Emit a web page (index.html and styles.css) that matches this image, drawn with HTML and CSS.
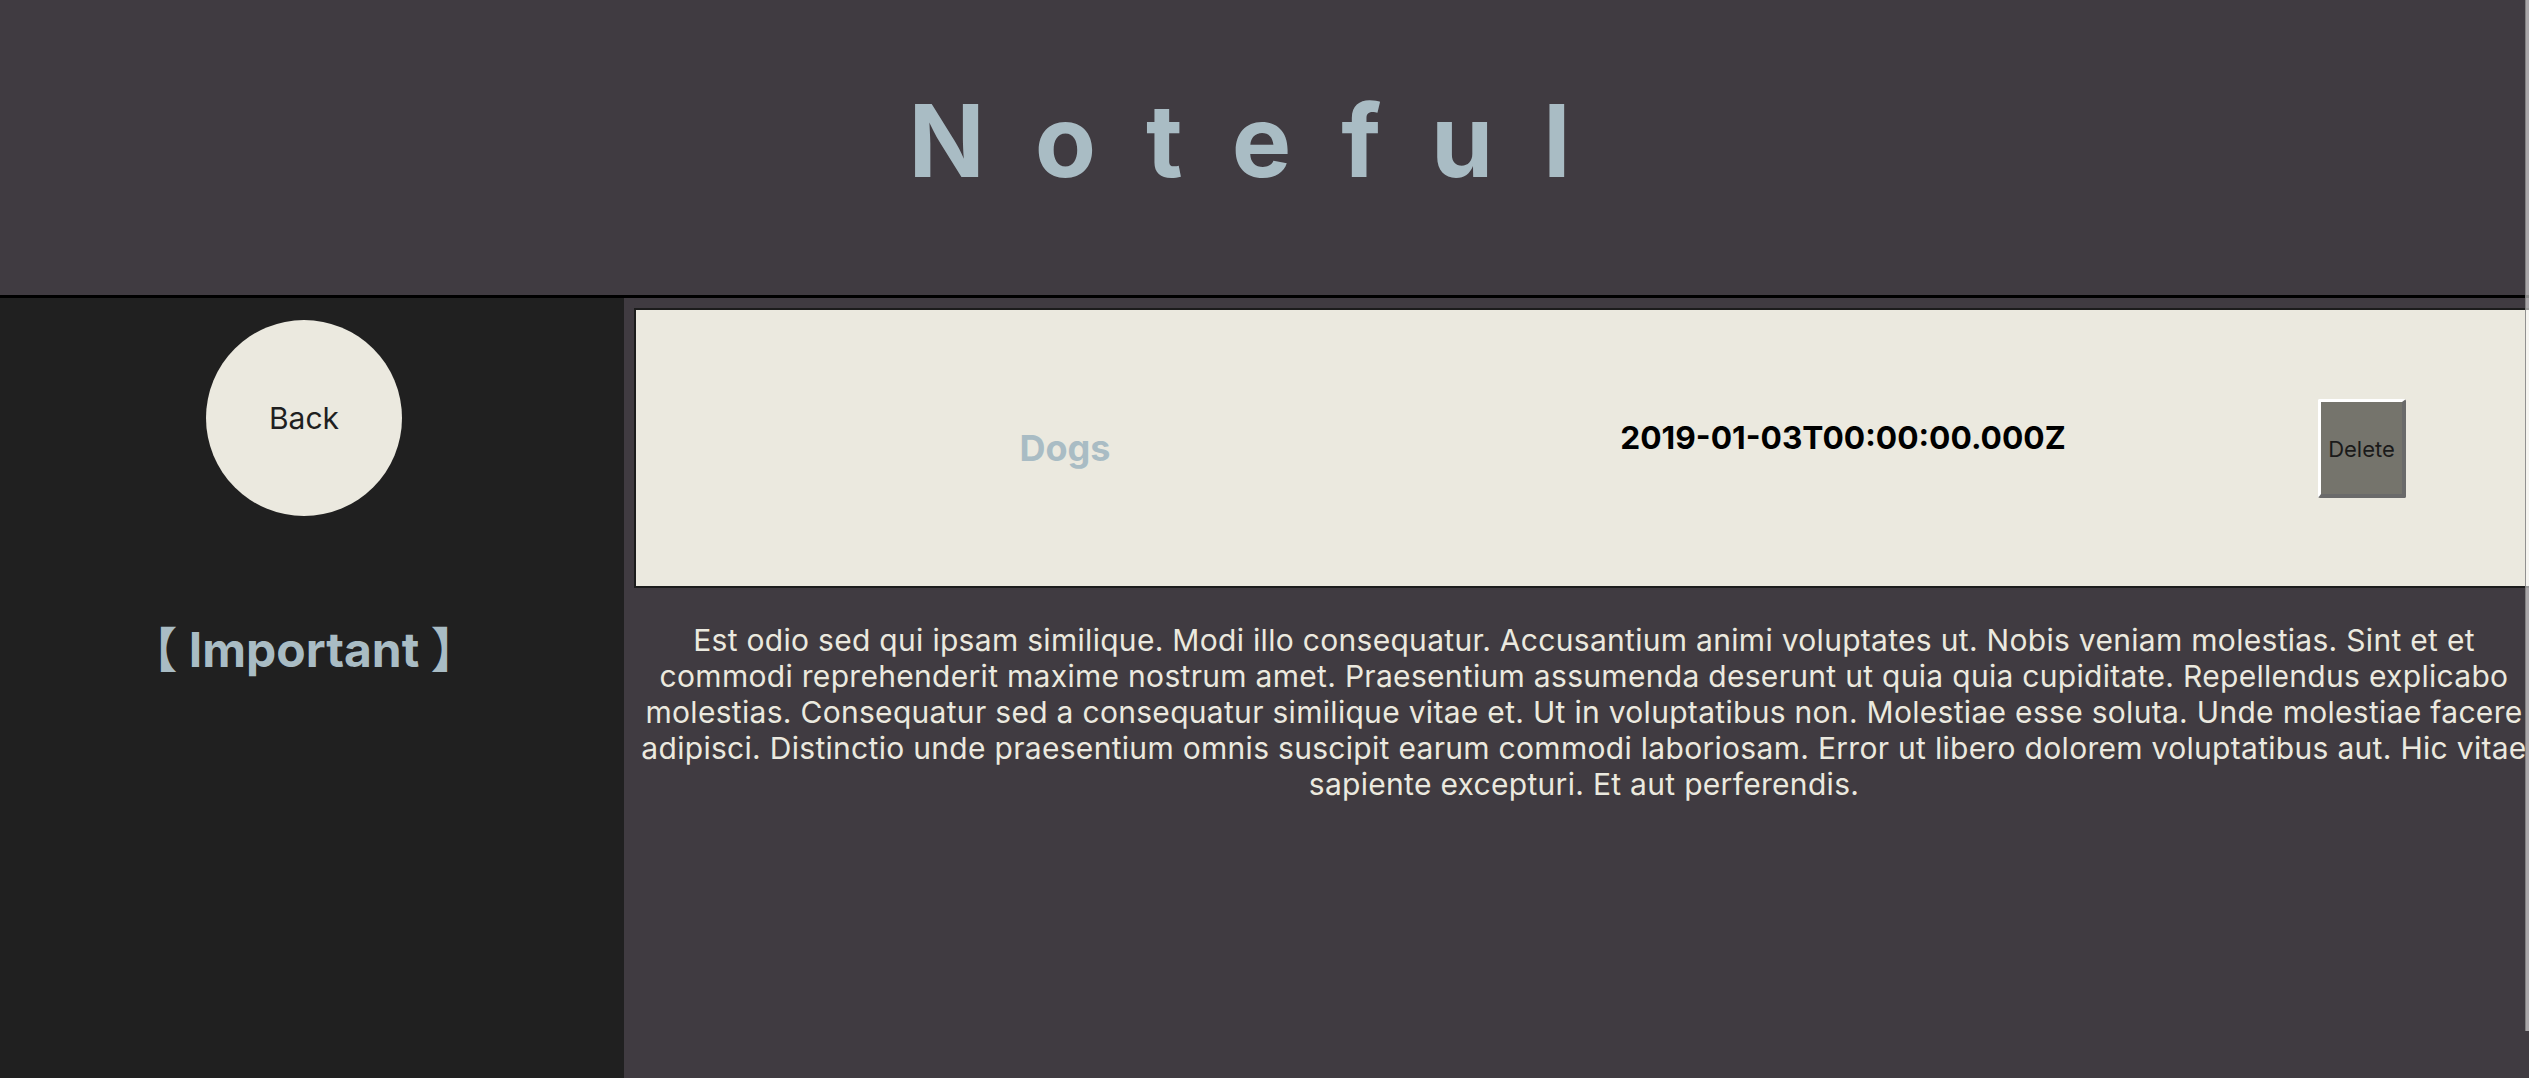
FILE: index.html
```html
<!DOCTYPE html>
<html lang="en">
<head>
<meta charset="utf-8">
<title>Noteful</title>
<link rel="stylesheet" href="styles.css">
</head>
<body>
<header class="app-header">
  <h1 class="app-title">Noteful</h1>
</header>
<div class="layout">
  <aside class="sidebar">
    <button class="back-btn" type="button">Back</button>
    <h2 class="folder-name">【 Important 】</h2>
  </aside>
  <main class="main">
    <div class="content">
      <section class="note">
        <h2 class="note-title">Dogs</h2>
        <p class="note-date">2019-01-03T00:00:00.000Z</p>
        <div class="note-actions">
          <button class="delete-btn" type="button">Delete</button>
        </div>
      </section>
      <p class="note-body">Est odio sed qui ipsam similique. Modi illo consequatur. Accusantium animi voluptates ut. Nobis veniam molestias. Sint et et commodi reprehenderit maxime nostrum amet. Praesentium assumenda deserunt ut quia quia cupiditate. Repellendus explicabo molestias. Consequatur sed a consequatur similique vitae et. Ut in voluptatibus non. Molestiae esse soluta. Unde molestiae facere adipisci. Distinctio unde praesentium omnis suscipit earum commodi laboriosam. Error ut libero dolorem voluptatibus aut. Hic vitae sapiente excepturi. Et aut perferendis.</p>
    </div>
  </main>
</div>
<div class="scroll-track"></div>
</body>
</html>
```
FILE: styles.css
```css
* {
  box-sizing: border-box;
}

html, body {
  margin: 0;
  padding: 0;
  height: 100%;
}

body {
  background: #403b41;
  font-family: Inter, "Noto Sans CJK JP", sans-serif;
  overflow: hidden;
  display: flex;
  flex-direction: column;
}

.app-header {
  height: 298px;
  flex: 0 0 auto;
  background: #403b41;
  border-bottom: 3px solid #000;
  padding-top: 91px;
}

.app-title {
  margin: 0;
  text-align: center;
  font-size: 100px;
  line-height: 100px;
  font-weight: 700;
  letter-spacing: 50px;
  color: #a9bcc4;
}

.layout {
  flex: 1 1 auto;
  display: flex;
  min-height: 0;
  overflow: hidden;
}

.sidebar {
  flex: 0 0 624px;
  background: #202020;
  display: flex;
  flex-direction: column;
  align-items: center;
  padding: 22px 16px 0 0;
}

.back-btn {
  width: 196px;
  height: 196px;
  border-radius: 50%;
  border: none;
  background: #ebe9df;
  color: #1f1f1f;
  font-family: Inter, sans-serif;
  font-size: 30px;
  padding: 0;
}

.folder-name {
  margin: 105px 0 0;
  font-size: 48px;
  line-height: 58px;
  font-weight: 700;
  color: #a9bcc4;
  white-space: nowrap;
}

.main {
  flex: 1 1 auto;
  background: #403b41;
  padding: 10px 0 0 10px;
  min-width: 0;
}

.content {
  width: 1900px;
}

.note {
  display: grid;
  grid-template-columns: 858px 698px 340px;
  align-items: center;
  height: 280px;
  background: #ebe9df;
  border: 2px solid #1c1c1c;
}

.note-title {
  margin: 0;
  text-align: center;
  font-size: 36px;
  font-weight: 700;
  color: #a9bcc4;
}

.note-date {
  margin: 0 0 22px;
  text-align: center;
  font-size: 31.7px;
  font-weight: 700;
  color: #000;
}

.note-actions {
  display: flex;
  justify-content: center;
}

.delete-btn {
  width: 88px;
  height: 99px;
  padding: 3px 0 0;
  background: #75746c;
  color: #1a1a1a;
  font-family: Inter, sans-serif;
  font-size: 22px;
  border-style: solid;
  border-width: 3px 4px 4px 3px;
  border-color: #ffffff #6a6a6a #6a6a6a #ffffff;
  border-radius: 2px;
}

.note-body {
  margin: 34px 0 0;
  padding: 0 2px;
  text-align: center;
  font-size: 30px;
  line-height: 36px;
  letter-spacing: 0.3px;
  color: #ebe9df;
}

.scroll-track {
  position: fixed;
  top: 0;
  right: 0;
  width: 4px;
  height: 1031px;
  background: rgba(255, 255, 255, 0.55);
  border-left: 1px solid rgba(120, 120, 120, 0.8);
}
```
